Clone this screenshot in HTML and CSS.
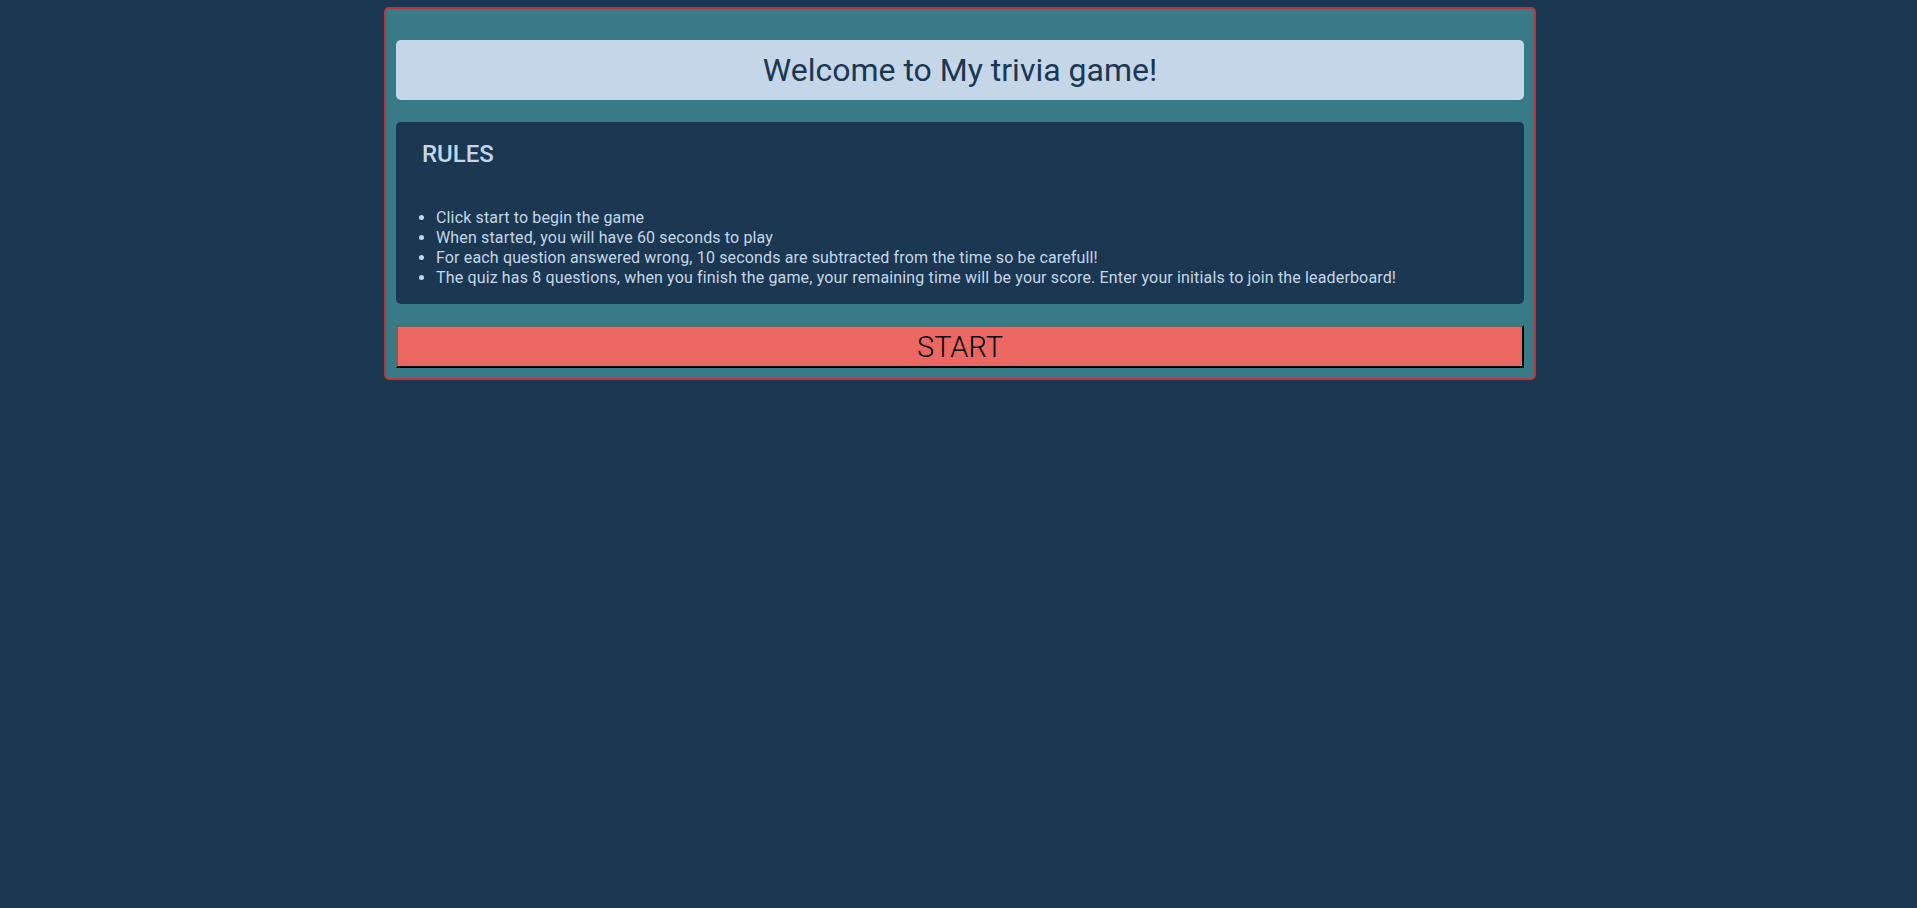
FILE: index.html
```html
<!DOCTYPE html>
<html lang="en">
<head>
<meta charset="utf-8">
<title>Trivia Game</title>
<link rel="stylesheet" href="styles.css">
</head>
<body>
<main class="card">
  <h1 class="title">Welcome to My trivia game!</h1>
  <section class="rules">
    <h2 class="rules-title">RULES</h2>
    <ul class="rules-list">
      <li>Click start to begin the game</li>
      <li>When started, you will have 60 seconds to play</li>
      <li>For each question answered wrong, 10 seconds are subtracted from the time so be carefull!</li>
      <li>The quiz has 8 questions, when you finish the game, your remaining time will be your score. Enter your initials to join the leaderboard!</li>
    </ul>
  </section>
  <button class="start">START</button>
</main>
</body>
</html>
```
FILE: styles.css
```css
html, body {
  margin: 0;
  padding: 0;
  background: #1b3752;
  min-height: 100%;
}
body {
  font-family: Roboto, "Liberation Sans", Arial, sans-serif;
}
.card {
  box-sizing: border-box;
  width: 1152px;
  margin: 7px 0 0 384px;
  padding: 10px;
  background: #387b87;
  border: 2px solid #b9363a;
  border-radius: 5px;
}
.title {
  margin: 21px 0 22px;
  height: 60px;
  display: flex;
  align-items: center;
  justify-content: center;
  background: #c4d6e8;
  color: #1b3752;
  border-radius: 5px;
  font-size: 32px;
  font-weight: 400;
}
.rules {
  background: #1b3752;
  color: #c4d6e8;
  border-radius: 5px;
  padding: 18px 0 1px;
}
.rules-title {
  margin: 0 0 0 26px;
  font-size: 24px;
  line-height: 28px;
  font-weight: 500;
}
.rules-list {
  margin: 40px 0 15px;
  padding-left: 40px;
  font-size: 16px;
  line-height: 20px;
  letter-spacing: 0.15px;
}
.start {
  display: block;
  width: 100%;
  height: 43px;
  margin: 21px 0 0;
  background: #ec6762;
  color: #000;
  font-family: Roboto, "Liberation Sans", sans-serif;
  font-weight: 300;
  font-size: 29px;
  border: 2px solid;
  border-color: #666 #000 #000 #666;
  padding: 0;
}
```
